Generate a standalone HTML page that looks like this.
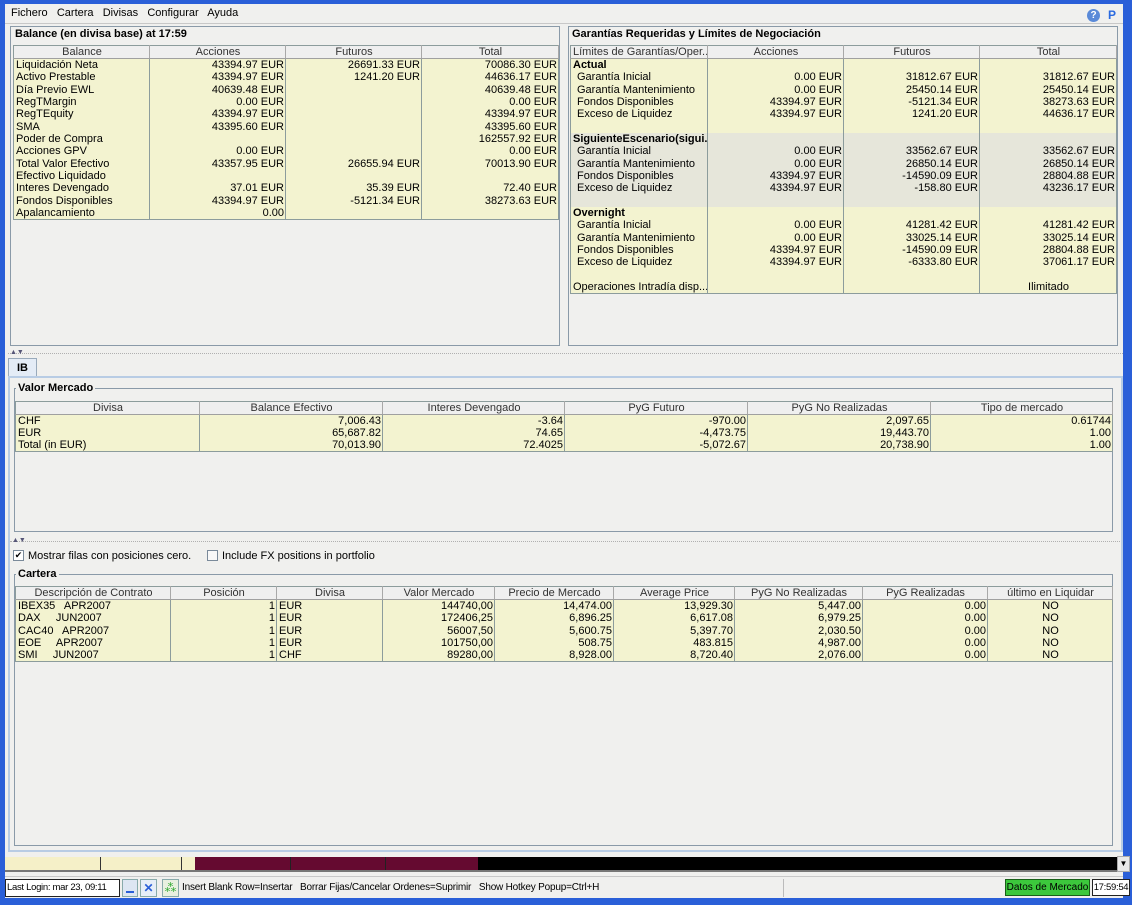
<!DOCTYPE html>
<html><head><meta charset="utf-8"><style>
*{margin:0;padding:0;box-sizing:border-box}
body{width:1132px;height:905px;overflow:hidden;background:#f0f0ee;font-family:"Liberation Sans",sans-serif;font-size:11px;color:#000;position:relative}
.a{position:absolute;white-space:nowrap}
table{border-collapse:collapse;table-layout:fixed;position:absolute;font-size:11px}
td,th{height:12.35px;line-height:12px;padding:0 1px 0 2px;white-space:nowrap;overflow:hidden;border-right:1px solid #8c9c9c}
th{font-weight:normal;background:#efefef;border-bottom:1px solid #a0a0a0;border-right:1px solid #a8a8a8;height:13px;color:#333;text-align:center}
td{background:#f3f3d0}
tr.g td{background:#e6e6da}
.r{text-align:right}.c{text-align:center}.b{font-weight:bold}
td.i{padding-left:6px}
.box{position:absolute;border:1px solid #8a9aa8;background:#f0f0ee}
.tl{position:absolute;font-weight:bold;font-size:11px;background:#f0f0ee;padding:0 2px}
</style></head><body>
<div class="a" style="left:0;top:0;width:1132px;height:4px;background:#2a5fd8"></div>
<div class="a" style="left:0;top:0;width:5px;height:905px;background:#2a5fd8"></div>
<div class="a" style="left:1123px;top:0;width:9px;height:905px;background:#2a5fd8"></div>
<div class="a" style="left:0;top:898px;width:1132px;height:7px;background:#2a5fd8"></div>
<div class="a" style="left:5px;top:4px;width:1118px;height:20px;background:#f0f0ee;border-bottom:1px solid #c8c8c8"></div>
<div class="a" style="left:11px;top:7px;font-size:11px">Fichero&nbsp;&nbsp; Cartera&nbsp;&nbsp; Divisas&nbsp;&nbsp; Configurar&nbsp;&nbsp; Ayuda</div>
<div class="a" style="left:1087px;top:9px;width:13px;height:13px;border-radius:50%;background:#5a8ad8;color:#fff;font-size:10px;font-weight:bold;text-align:center;line-height:13px">?</div>
<div class="a" style="left:1108px;top:8px;color:#2a6ae0;font-weight:bold;font-size:12px">P</div>

<div class="box" style="left:10px;top:26px;width:550px;height:320px"></div>
<div class="tl" style="left:13px;top:28px">Balance (en divisa base) at 17:59</div>
<table style="left:13px;top:45px;width:545px;border:1px solid #8c9c9c">
<colgroup><col style="width:136px"><col style="width:136px"><col style="width:136px"><col style="width:137px"></colgroup>
<tr><th>Balance</th><th>Acciones</th><th>Futuros</th><th>Total</th></tr>
<tr><td>Liquidación Neta</td><td class="r">43394.97 EUR</td><td class="r">26691.33 EUR</td><td class="r">70086.30 EUR</td></tr>
<tr><td>Activo Prestable</td><td class="r">43394.97 EUR</td><td class="r">1241.20 EUR</td><td class="r">44636.17 EUR</td></tr>
<tr><td>Día Previo EWL</td><td class="r">40639.48 EUR</td><td></td><td class="r">40639.48 EUR</td></tr>
<tr><td>RegTMargin</td><td class="r">0.00 EUR</td><td></td><td class="r">0.00 EUR</td></tr>
<tr><td>RegTEquity</td><td class="r">43394.97 EUR</td><td></td><td class="r">43394.97 EUR</td></tr>
<tr><td>SMA</td><td class="r">43395.60 EUR</td><td></td><td class="r">43395.60 EUR</td></tr>
<tr><td>Poder de Compra</td><td></td><td></td><td class="r">162557.92 EUR</td></tr>
<tr><td>Acciones GPV</td><td class="r">0.00 EUR</td><td></td><td class="r">0.00 EUR</td></tr>
<tr><td>Total Valor Efectivo</td><td class="r">43357.95 EUR</td><td class="r">26655.94 EUR</td><td class="r">70013.90 EUR</td></tr>
<tr><td>Efectivo Liquidado</td><td></td><td></td><td></td></tr>
<tr><td>Interes Devengado</td><td class="r">37.01 EUR</td><td class="r">35.39 EUR</td><td class="r">72.40 EUR</td></tr>
<tr><td>Fondos Disponibles</td><td class="r">43394.97 EUR</td><td class="r">-5121.34 EUR</td><td class="r">38273.63 EUR</td></tr>
<tr><td>Apalancamiento</td><td class="r">0.00</td><td></td><td></td></tr>
</table>

<div class="box" style="left:568px;top:26px;width:550px;height:320px"></div>
<div class="tl" style="left:570px;top:28px">Garantías Requeridas y Límites de Negociación</div>
<table style="left:570px;top:45px;width:546px;border:1px solid #8c9c9c">
<colgroup><col style="width:137px"><col style="width:136px"><col style="width:136px"><col style="width:137px"></colgroup>
<tr><th style="text-align:left">Límites de Garantías/Oper...</th><th>Acciones</th><th>Futuros</th><th>Total</th></tr>
<tr><td class="b">Actual</td><td></td><td></td><td></td></tr>
<tr><td class="i">Garantía Inicial</td><td class="r">0.00 EUR</td><td class="r">31812.67 EUR</td><td class="r">31812.67 EUR</td></tr>
<tr><td class="i">Garantía Mantenimiento</td><td class="r">0.00 EUR</td><td class="r">25450.14 EUR</td><td class="r">25450.14 EUR</td></tr>
<tr><td class="i">Fondos Disponibles</td><td class="r">43394.97 EUR</td><td class="r">-5121.34 EUR</td><td class="r">38273.63 EUR</td></tr>
<tr><td class="i">Exceso de Liquidez</td><td class="r">43394.97 EUR</td><td class="r">1241.20 EUR</td><td class="r">44636.17 EUR</td></tr>
<tr><td></td><td></td><td></td><td></td></tr>
<tr class="g"><td class="b">SiguienteEscenario(sigui...</td><td></td><td></td><td></td></tr>
<tr class="g"><td class="i">Garantía Inicial</td><td class="r">0.00 EUR</td><td class="r">33562.67 EUR</td><td class="r">33562.67 EUR</td></tr>
<tr class="g"><td class="i">Garantía Mantenimiento</td><td class="r">0.00 EUR</td><td class="r">26850.14 EUR</td><td class="r">26850.14 EUR</td></tr>
<tr class="g"><td class="i">Fondos Disponibles</td><td class="r">43394.97 EUR</td><td class="r">-14590.09 EUR</td><td class="r">28804.88 EUR</td></tr>
<tr class="g"><td class="i">Exceso de Liquidez</td><td class="r">43394.97 EUR</td><td class="r">-158.80 EUR</td><td class="r">43236.17 EUR</td></tr>
<tr class="g"><td></td><td></td><td></td><td></td></tr>
<tr><td class="b">Overnight</td><td></td><td></td><td></td></tr>
<tr><td class="i">Garantía Inicial</td><td class="r">0.00 EUR</td><td class="r">41281.42 EUR</td><td class="r">41281.42 EUR</td></tr>
<tr><td class="i">Garantía Mantenimiento</td><td class="r">0.00 EUR</td><td class="r">33025.14 EUR</td><td class="r">33025.14 EUR</td></tr>
<tr><td class="i">Fondos Disponibles</td><td class="r">43394.97 EUR</td><td class="r">-14590.09 EUR</td><td class="r">28804.88 EUR</td></tr>
<tr><td class="i">Exceso de Liquidez</td><td class="r">43394.97 EUR</td><td class="r">-6333.80 EUR</td><td class="r">37061.17 EUR</td></tr>
<tr><td></td><td></td><td></td><td></td></tr>
<tr><td>Operaciones Intradía disp...</td><td></td><td></td><td class="c">Ilimitado</td></tr>
</table>

<div class="a" style="left:8px;top:353px;width:1115px;border-top:1px dotted #b0b0b0"></div>
<div class="a" style="left:10px;top:349px;font-size:7px;color:#557">▲▼</div>
<div class="a" style="left:8px;top:358px;width:29px;height:19px;background:#e4ecf6;border:1px solid #9ab;border-bottom:none;font-weight:bold;font-size:11px;text-align:center;line-height:18px">IB</div>
<div class="a" style="left:8px;top:376px;width:1115px;height:476px;border:2px solid #b8cce4;background:#f0f0ee"></div>

<div class="box" style="left:14px;top:388px;width:1099px;height:144px"></div>
<div class="tl" style="left:16px;top:382px">Valor Mercado</div>
<table style="left:15px;top:401px;width:1097px;border:1px solid #8c9c9c">
<colgroup><col style="width:184px"><col style="width:183px"><col style="width:182px"><col style="width:183px"><col style="width:183px"><col style="width:182px"></colgroup>
<tr><th>Divisa</th><th>Balance Efectivo</th><th>Interes Devengado</th><th>PyG Futuro</th><th>PyG No Realizadas</th><th>Tipo de mercado</th></tr>
<tr><td>CHF</td><td class="r">7,006.43</td><td class="r">-3.64</td><td class="r">-970.00</td><td class="r">2,097.65</td><td class="r">0.61744</td></tr>
<tr><td>EUR</td><td class="r">65,687.82</td><td class="r">74.65</td><td class="r">-4,473.75</td><td class="r">19,443.70</td><td class="r">1.00</td></tr>
<tr><td>Total (in EUR)</td><td class="r">70,013.90</td><td class="r">72.4025</td><td class="r">-5,072.67</td><td class="r">20,738.90</td><td class="r">1.00</td></tr>
</table>

<div class="a" style="left:10px;top:541px;width:1110px;border-top:1px dotted #b0b0b0"></div>
<div class="a" style="left:12px;top:537px;font-size:7px;color:#557">▲▼</div>

<div class="a" style="left:13px;top:550px;width:11px;height:11px;border:1px solid #7a8a9a;background:#fff;font-size:9px;line-height:9px;text-align:center">✔</div>
<div class="a" style="left:28px;top:550px">Mostrar filas con posiciones cero.</div>
<div class="a" style="left:207px;top:550px;width:11px;height:11px;border:1px solid #7a8a9a;background:#f8f8f8"></div>
<div class="a" style="left:222px;top:550px">Include FX positions in portfolio</div>

<div class="box" style="left:14px;top:574px;width:1099px;height:272px"></div>
<div class="tl" style="left:16px;top:568px">Cartera</div>
<table style="left:15px;top:586px;width:1097px;border:1px solid #8c9c9c">
<colgroup><col style="width:155px"><col style="width:106px"><col style="width:106px"><col style="width:112px"><col style="width:119px"><col style="width:121px"><col style="width:128px"><col style="width:125px"><col style="width:125px"></colgroup>
<tr><th>Descripción de Contrato</th><th>Posición</th><th>Divisa</th><th>Valor Mercado</th><th>Precio de Mercado</th><th>Average Price</th><th>PyG No Realizadas</th><th>PyG Realizadas</th><th>último en Liquidar</th></tr>
<tr><td>IBEX35&nbsp;&nbsp; APR2007</td><td class="r">1</td><td>EUR</td><td class="r">144740,00</td><td class="r">14,474.00</td><td class="r">13,929.30</td><td class="r">5,447.00</td><td class="r">0.00</td><td class="c">NO</td></tr>
<tr><td>DAX&nbsp;&nbsp;&nbsp;&nbsp; JUN2007</td><td class="r">1</td><td>EUR</td><td class="r">172406,25</td><td class="r">6,896.25</td><td class="r">6,617.08</td><td class="r">6,979.25</td><td class="r">0.00</td><td class="c">NO</td></tr>
<tr><td>CAC40&nbsp;&nbsp; APR2007</td><td class="r">1</td><td>EUR</td><td class="r">56007,50</td><td class="r">5,600.75</td><td class="r">5,397.70</td><td class="r">2,030.50</td><td class="r">0.00</td><td class="c">NO</td></tr>
<tr><td>EOE&nbsp;&nbsp;&nbsp;&nbsp; APR2007</td><td class="r">1</td><td>EUR</td><td class="r">101750,00</td><td class="r">508.75</td><td class="r">483.815</td><td class="r">4,987.00</td><td class="r">0.00</td><td class="c">NO</td></tr>
<tr><td>SMI&nbsp;&nbsp;&nbsp;&nbsp; JUN2007</td><td class="r">1</td><td>CHF</td><td class="r">89280,00</td><td class="r">8,928.00</td><td class="r">8,720.40</td><td class="r">2,076.00</td><td class="r">0.00</td><td class="c">NO</td></tr>
</table>

<div class="a" style="left:5px;top:857px;width:1112px;height:15px;background:#000"></div>
<div class="a" style="left:5px;top:857px;width:96px;height:13px;background:#f5f0c8;border-right:1px solid #333"></div>
<div class="a" style="left:101px;top:857px;width:81px;height:13px;background:#f5f0c8;border-right:1px solid #333"></div>
<div class="a" style="left:182px;top:857px;width:13px;height:13px;background:#f5f0c8"></div>
<div class="a" style="left:195px;top:857px;width:283px;height:13px;background:#650a30"></div>
<div class="a" style="left:290px;top:857px;width:1px;height:13px;background:#222"></div>
<div class="a" style="left:385px;top:857px;width:1px;height:13px;background:#222"></div>
<div class="a" style="left:5px;top:870px;width:1112px;height:2px;background:#777"></div>
<div class="a" style="left:1117px;top:856px;width:13px;height:16px;background:#e8e8e8;border:1px solid #aaa;font-size:8px;text-align:center;line-height:14px">▼</div>

<div class="a" style="left:5px;top:876px;width:1118px;height:22px;background:#f0f0ee;border-top:1px solid #c8c8c8"></div>
<div class="a" style="left:5px;top:879px;width:115px;height:18px;border:1px solid #222;background:#fff;font-size:9.5px;line-height:16px;padding-left:1px;letter-spacing:-0.3px;overflow:hidden">Last Login: mar 23, 09:11</div>
<div class="a" style="left:122px;top:879px;width:16px;height:18px;background:#dde6f2;border:1px solid #8aa"><div style="margin:11px 3px 0;height:2px;background:#2a5fd8"></div></div>
<div class="a" style="left:140px;top:879px;width:17px;height:18px;background:#e6eef8;border:1px solid #8aa;color:#2a5fd8;font-size:12px;font-weight:bold;text-align:center;line-height:16px">✕</div>
<div class="a" style="left:162px;top:879px;width:17px;height:18px;background:#e8f0e0;border:1px solid #8aa;color:#3a3;font-size:12px;text-align:center;line-height:16px">⁂</div>
<div class="a" style="left:182px;top:882px;font-size:10px;letter-spacing:-0.2px">Insert Blank Row=Insertar&nbsp;&nbsp; Borrar Fijas/Cancelar Ordenes=Suprimir&nbsp;&nbsp; Show Hotkey Popup=Ctrl+H</div>
<div class="a" style="left:783px;top:879px;width:222px;height:18px;border-left:1px solid #bbb"></div>
<div class="a" style="left:1005px;top:879px;width:85px;height:17px;background:#3cc83c;border:1px solid #186018;font-size:10px;line-height:15px;text-align:center;overflow:hidden">Datos de Mercado</div>
<div class="a" style="left:1092px;top:879px;width:38px;height:17px;background:#fff;border:1px solid #222;font-size:9.5px;line-height:15px;text-align:center;letter-spacing:-0.3px;overflow:hidden">17:59:54</div>
</body></html>
